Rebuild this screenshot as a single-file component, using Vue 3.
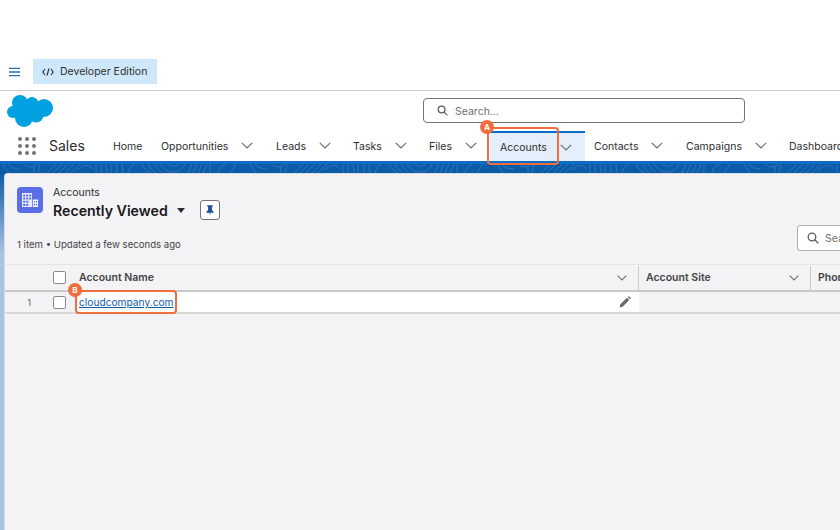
<template>
  <div class="page">
    <div class="topbar">
      <button class="menu-btn" aria-label="Menu">
        <svg viewBox="0 0 12 10" width="12" height="10" fill="none" stroke="#2a6cb0" stroke-width="1.5">
          <path d="M0 1h12M0 5h12M0 9h12" />
        </svg>
      </button>
      <div class="edition">
        <svg viewBox="0 0 12 10" width="12" height="10" fill="none" stroke="#32373c" stroke-width="1.2">
          <path d="M3 2 .9 5 3 8M9 2l2.1 3L9 8M7 1.5 5 8.5" />
        </svg>
        <span>Developer Edition</span>
      </div>
    </div>

    <div class="header">
      <svg class="logo" viewBox="0 0 46 32" width="46" height="32">
        <g fill="#00a1e0">
          <circle cx="13" cy="8" r="8" />
          <circle cx="25" cy="8.500" r="6.500" />
          <circle cx="37" cy="13" r="9" />
          <circle cx="6" cy="17" r="6" />
          <circle cx="17" cy="23" r="9" />
          <circle cx="29" cy="20" r="7.500" />
          <rect x="10" y="8" width="26" height="14" />
        </g>
      </svg>
      <div class="search">
        <svg viewBox="0 0 12 12" width="11" height="11" fill="none" stroke="#5c5c5c" stroke-width="1.4">
          <circle cx="5" cy="5" r="3.700" />
          <path d="M7.800 7.800 11.300 11.300" />
        </svg>
        <span>Search...</span>
      </div>
    </div>

    <nav class="nav">
      <div class="launcher">
        <i v-for="n in 9" :key="n"></i>
      </div>
      <div class="app-name">Sales</div>
      <div
        v-for="item in navItems"
        :key="item.label"
        class="nav-item"
        :class="{ 'is-active': item.active }"
        :style="{ width: item.width + 'px' }"
      >
        <span>{{ item.label }}</span>
        <svg v-if="item.menu" viewBox="0 0 12 7" width="12" height="7" fill="none" stroke="#706e6b" stroke-width="1.2">
          <path d="M.8 .8 6 6 11.200 .8" />
        </svg>
      </div>
      <div class="callout callout-a"><b>A</b></div>
    </nav>

    <div class="band">
      <svg width="840" height="9" fill="none">
        <defs>
          <pattern id="contours" width="247" height="9" patternUnits="userSpaceOnUse">
            <g stroke="#3f83bf" stroke-width=".8" opacity=".8">
              <path d="M3 0 9 9M8 0q4 5 12 5M24 0q6 6 14 0M34 9V2M38 9l2-9" />
              <path d="M47 9 56 0M53 9 62 0M59 9 68 0M65 9 74 0M71 9 80 0M77 6l6-4q6-2 10 3" />
              <path d="M96 0v9M101 0v9M106 0l1 9M111 0v9M116 0q3 4 0 9M122 0l1 9M128 9q1-6 6-9" />
              <path d="M142 0q3 7 9 9M148 0q3 6 8 9M154 0q3 5 7 8M160 0q6 9 14 8q8-1 11-8M168 0q6 5 11 0" />
              <path d="M188 9l4-9M193 9l4-9M198 9l4-9M203 9l4-9M210 0v9M218 9q1-7 8-9M236 0l-6 9" />
            </g>
          </pattern>
        </defs>
        <rect width="840" height="9" fill="url(#contours)" />
      </svg>
    </div>

    <div class="body">
      <div class="main">
        <div class="list-head">
          <div class="title-row">
            <div class="obj-icon">
              <svg viewBox="0 0 18 16" width="18" height="16" fill="#fff">
                <path d="M1 1h10v14H1zM2.200 2.400v2h2v-2zm3 0v2h2v-2zm3 0v2h2v-2zM2.200 5.600v2h2v-2zm3 0v2h2v-2zm3 0v2h2v-2zM2.200 8.800v2h2v-2zm3 0v2h2v-2zM2.200 12v2h2v-2zm3 0v2h2v-2z" fill-rule="evenodd" opacity=".85" />
                <path d="M11.800 7.500H17V15h-5.200zM12.800 9v1.600h1.300V9zm2 0v1.600h1.300V9zm-2 2.800v1.600h1.300v-1.600zm2 0v1.600h1.300v-1.600z" fill-rule="evenodd" />
              </svg>
            </div>
            <div class="titles">
              <div class="crumb">Accounts</div>
              <div class="view-row">
                <span class="view-name">Recently Viewed</span>
                <span class="caret"></span>
                <button class="pin" aria-label="Pin">
                  <svg viewBox="0 0 10 13" width="8" height="11" fill="#1b5297">
                    <path d="M1.500 0h7v1.300L7.400 2v4l2.100 2.200v1H5.600L5 13l-.6-3.800H.5v-1L2.600 6V2L1.500 1.300z" />
                  </svg>
                </button>
              </div>
            </div>
          </div>
          <div class="meta-row">
            <span class="meta">1 item • Updated a few seconds ago</span>
            <div class="list-search">
              <svg viewBox="0 0 12 12" width="12" height="12" fill="none" stroke="#5c5c5c" stroke-width="1.300">
                <circle cx="5" cy="5" r="3.800" />
                <path d="M7.800 7.800 11.300 11.300" />
              </svg>
              <span>Search this list...</span>
            </div>
          </div>
        </div>

        <div class="table">
          <div class="thead">
            <div class="col-num"></div>
            <div class="col-check"><span class="check"></span></div>
            <div class="th th-name">
              <span>Account Name</span>
              <svg viewBox="0 0 10 6" width="10" height="6" fill="none" stroke="#706e6b" stroke-width="1.100"><path d="M.6 .6 5 5 9.400 .6" /></svg>
            </div>
            <div class="th th-site">
              <span>Account Site</span>
              <svg viewBox="0 0 10 6" width="10" height="6" fill="none" stroke="#706e6b" stroke-width="1.100"><path d="M.6 .6 5 5 9.400 .6" /></svg>
            </div>
            <div class="th th-phone"><span>Phone</span></div>
          </div>
          <div class="tbody">
            <div class="col-num">1</div>
            <div class="col-check"><span class="check"></span></div>
            <div class="td-name">
              <a class="link" href="#">cloudcompany.com</a>
              <svg viewBox="0 0 12 12" width="12" height="12" fill="#6b6b6b">
                <path d="M.6 11.400 1.300 8.300 7.900 1.700 10.300 4.100 3.700 10.700zM8.700 .9 9.300 .4q.5-.4 1 0l1.300 1.300q.4.5 0 1l-.6.6z" />
              </svg>
              <div class="callout callout-b"><b>B</b></div>
            </div>
          </div>
        </div>
      </div>
    </div>
  </div>
</template>

<script setup>
const navItems = [
  { label: 'Home', width: 48 },
  { label: 'Opportunities', width: 115, menu: true },
  { label: 'Leads', width: 77, menu: true },
  { label: 'Tasks', width: 76, menu: true },
  { label: 'Files', width: 71, menu: true },
  { label: 'Accounts', width: 95, menu: true, active: true },
  { label: 'Contacts', width: 92, menu: true },
  { label: 'Campaigns', width: 103, menu: true },
  { label: 'Dashboards', width: 90 }
]
</script>

<style>
html,
body {
  margin: 0;
  background: #fff;
  overflow: hidden;
}
</style>

<style scoped>
.page {
  width: 840px;
  height: 530px;
  overflow: hidden;
  display: flex;
  flex-direction: column;
  background: #fff;
  color: #181818;
  font-family: Inter, "Liberation Sans", sans-serif;
  font-size: 10.5px;
}

.topbar {
  height: 31px;
  margin-top: 59px;
  flex-shrink: 0;
  display: flex;
  align-items: flex-start;
  gap: 13px;
  padding-left: 9px;
  border-bottom: 1px solid #c9c9c9;
}

.menu-btn {
  width: 11px;
  height: 25px;
  padding: 0;
  border: none;
  background: none;
  display: flex;
  align-items: center;
}

.edition {
  width: 124px;
  height: 25px;
  background: #cfe7fb;
  display: flex;
  align-items: center;
  gap: 6px;
  padding-left: 9px;
  box-sizing: border-box;
  color: #2e2e2e;
}

.header {
  height: 39px;
  flex-shrink: 0;
  display: flex;
  align-items: flex-start;
  padding-left: 7px;
}

.logo {
  margin-top: 4px;
}

.search {
  margin: 7px 0 0 370px;
  width: 322px;
  height: 25px;
  box-sizing: border-box;
  border: 1px solid #747474;
  border-radius: 4px;
  display: flex;
  align-items: center;
  gap: 7px;
  padding-left: 13px;
  color: #706e6b;
}

.search span {
  padding-top: 1px;
}

.nav {
  height: 31px;
  flex-shrink: 0;
  position: relative;
  display: flex;
  align-items: stretch;
  white-space: nowrap;
}

.launcher {
  width: 18px;
  height: 18px;
  margin: 7px 0 0 18px;
  display: grid;
  grid-template-columns: repeat(3, 4px);
  grid-auto-rows: 4px;
  gap: 3px;
}

.launcher i {
  border-radius: 50%;
  background: #747474;
}

.app-name {
  width: 35px;
  margin: 0 29px 0 13px;
  font-size: 14px;
  line-height: 31px;
  color: #2e2e2e;
}

.nav-item {
  flex-shrink: 0;
  display: flex;
  align-items: center;
  gap: 13px;
  box-sizing: border-box;
  color: #2e2e2e;
}

.nav-item span {
  padding-top: 1px;
}

.nav-item.is-active {
  background: #e5effb;
  border-top: 2px solid #0b6bcb;
  margin: 1px 9px 0 -10px;
  padding-left: 10px;
}

.callout {
  position: absolute;
  box-sizing: border-box;
  border: 2px solid #f26d3d;
  border-radius: 4px;
  pointer-events: none;
}

.callout b {
  position: absolute;
  left: -9px;
  top: -9px;
  width: 14px;
  height: 14px;
  border-radius: 50%;
  background: #f26d3d;
  color: #fff;
  font-size: 8px;
  line-height: 14px;
  text-align: center;
}

.callout-a {
  left: 487px;
  top: -3px;
  width: 72px;
  height: 38px;
}

.band {
  height: 12px;
  flex-shrink: 0;
  box-sizing: border-box;
  background: #0b5ca8;
  border-top: 3px solid #0f6cc4;
}

.band svg {
  display: block;
}

.body {
  flex: 1;
  padding-left: 4px;
  background: linear-gradient(#0b5ca8, #a9c3e3 80px);
}

.main {
  height: 100%;
  box-sizing: border-box;
  background: #f3f2f5;
  border-top-left-radius: 4px;
  border-top: 1px solid #dcdce0;
  border-left: 1px solid #dcdce0;
}

.list-head {
  height: 90px;
  box-sizing: border-box;
  padding: 13px 0 0 12px;
}

.title-row {
  display: flex;
  gap: 10px;
}

.obj-icon {
  width: 26px;
  height: 26px;
  border-radius: 4px;
  background: #5a6ee6;
  display: flex;
  align-items: center;
  justify-content: center;
}

.crumb {
  line-height: 12px;
  color: #2e2e2e;
}

.view-row {
  margin-top: 1px;
  display: flex;
  align-items: center;
}

.view-name {
  font-size: 14.200px;
  font-weight: 600;
  color: #181818;
}

.caret {
  margin-left: 9px;
  border: 4px solid transparent;
  border-top: 5px solid #2e2e2e;
  border-bottom: none;
}

.pin {
  margin-left: 15px;
  width: 20px;
  height: 20px;
  padding: 0;
  border: 1px solid #747474;
  border-radius: 3px;
  background: #fff;
  display: flex;
  align-items: center;
  justify-content: center;
}

.meta-row {
  display: flex;
  justify-content: space-between;
  align-items: flex-start;
  white-space: nowrap;
}

.meta {
  padding-top: 19px;
  font-size: 9.600px;
  line-height: 12px;
  color: #444;
}

.list-search {
  width: 150px;
  height: 26px;
  flex-shrink: 0;
  margin: 5px -107px 0 0;
  box-sizing: border-box;
  border: 1px solid #b0adab;
  border-radius: 3px;
  background: #fff;
  display: flex;
  align-items: center;
  gap: 6px;
  padding-left: 9px;
  color: #706e6b;
}

.table {
  width: 835px;
  overflow: hidden;
}

.thead {
  height: 28px;
  box-sizing: border-box;
  display: flex;
  align-items: center;
  border-top: 1px solid #e5e5e5;
  border-bottom: 2px solid #c9c9c9;
  font-weight: 600;
  color: #444;
}

.col-num {
  width: 39px;
  flex-shrink: 0;
  padding-right: 13px;
  box-sizing: border-box;
  text-align: right;
  color: #666;
  font-size: 9.500px;
}

.col-check {
  width: 31px;
  flex-shrink: 0;
  display: flex;
  padding-left: 9px;
  box-sizing: border-box;
}

.check {
  width: 13px;
  height: 13px;
  box-sizing: border-box;
  border: 1px solid #8a8a8a;
  border-radius: 2px;
  background: #fff;
}

.th {
  height: 24px;
  flex-shrink: 0;
  box-sizing: border-box;
  display: flex;
  align-items: center;
  justify-content: space-between;
  border-right: 1px solid #c9c9c9;
}

.th span {
  padding-bottom: 1px;
}

.th-name {
  width: 564px;
  padding: 0 11px 0 4px;
}

.th-site {
  width: 172px;
  padding: 0 11px 0 7px;
}

.th-phone {
  padding-left: 7px;
  border-right: none;
}

.tbody {
  height: 22px;
  box-sizing: border-box;
  display: flex;
  align-items: center;
  border-bottom: 2px solid #d8d8d8;
}

.td-name {
  position: relative;
  width: 564px;
  height: 20px;
  flex-shrink: 0;
  background: #fff;
  display: flex;
  align-items: center;
  justify-content: space-between;
  box-sizing: border-box;
  padding: 0 8px 0 4px;
}

.link {
  color: #0b5cab;
  text-decoration: underline;
  font-size: 10.200px;
}

.callout-b {
  left: 0;
  top: -2px;
  width: 102px;
  height: 24px;
}
</style>
